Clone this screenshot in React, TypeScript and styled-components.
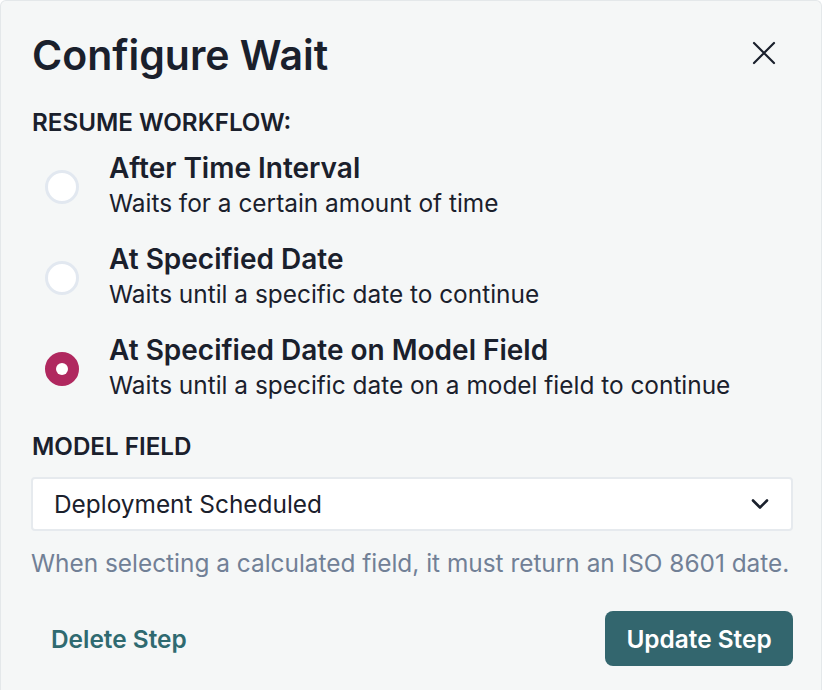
import React, { useState } from "react";
import styled, { createGlobalStyle } from "styled-components";

const GlobalStyle = createGlobalStyle`
  html, body {
    margin: 0;
    padding: 0;
    background: #ffffff;
  }
  body {
    font-family: Inter, "Noto Sans", sans-serif;
    color: #1a202c;
  }
  * { box-sizing: border-box; }
`;

const Panel = styled.div`
  width: 822px;
  height: 690px;
  background: #f5f7f7;
  border: 1px solid #e4e8ea;
  border-bottom: none;
  border-radius: 6px 6px 0 0;
  padding: 27px 28px 0 30px;
  display: flex;
  flex-direction: column;
`;

const Header = styled.div`
  display: flex;
  align-items: flex-start;
  justify-content: space-between;
  padding-left: 1px;
`;

const Title = styled.h2`
  margin: 0;
  font-size: 41px;
  font-weight: 600;
  line-height: 54px;
`;

const CloseButton = styled.button`
  border: none;
  background: transparent;
  padding: 0;
  margin: 10px 14px 0 0;
  width: 30px;
  height: 30px;
  display: flex;
  align-items: center;
  justify-content: center;
  color: #1a202c;
  cursor: pointer;
`;

const SectionLabel = styled.div<{ $top: number }>`
  margin-top: ${({ $top }) => $top}px;
  padding-left: 1px;
  font-size: 24.2px;
  font-weight: 600;
  text-transform: uppercase;
  line-height: 30px;
`;

const Options = styled.div`
  display: flex;
  flex-direction: column;
  gap: 24px;
  margin-top: 14px;
`;

const Option = styled.label`
  display: flex;
  align-items: center;
  gap: 30px;
  padding-left: 14px;
  cursor: pointer;
`;

const RadioDot = styled.span<{ $checked: boolean }>`
  flex: none;
  width: 34px;
  height: 34px;
  margin-top: 3px;
  border-radius: 50%;
  background: ${({ $checked }) => ($checked ? "#b0285f" : "#ffffff")};
  border: 3px solid ${({ $checked }) => ($checked ? "#b0285f" : "#e2e8f0")};
  display: flex;
  align-items: center;
  justify-content: center;
  &::after {
    content: "";
    display: ${({ $checked }) => ($checked ? "block" : "none")};
    width: 12px;
    height: 12px;
    border-radius: 50%;
    background: #ffffff;
  }
`;

const OptionText = styled.div`
  display: flex;
  flex-direction: column;
`;

const OptionTitle = styled.span`
  font-size: 28px;
  font-weight: 600;
  line-height: 32px;
`;

const OptionDesc = styled.span`
  margin-top: 3px;
  font-size: 24.4px;
  line-height: 32px;
`;

const Select = styled.div`
  margin-top: 15px;
  height: 54px;
  background: #ffffff;
  border: 2px solid #e6eaee;
  border-radius: 4px;
  display: flex;
  align-items: center;
  justify-content: space-between;
  padding: 0 22px 0 21px;
  font-size: 24.4px;
`;

const Helper = styled.div`
  margin-top: 17px;
  font-size: 24.4px;
  line-height: 30px;
  color: #718096;
`;

const Footer = styled.div`
  margin-top: 33px;
  display: flex;
  align-items: center;
  justify-content: space-between;
`;

const LinkButton = styled.button`
  border: none;
  background: transparent;
  padding: 0 0 0 20px;
  font-family: inherit;
  font-size: 24.4px;
  font-weight: 600;
  color: #2f6a70;
  cursor: pointer;
`;

const PrimaryButton = styled.button`
  border: none;
  background: #33666e;
  color: #ffffff;
  height: 55px;
  width: 188px;
  border-radius: 8px;
  font-family: inherit;
  font-size: 24.4px;
  font-weight: 600;
  cursor: pointer;
`;

const options = [
  { title: "After Time Interval", desc: "Waits for a certain amount of time" },
  { title: "At Specified Date", desc: "Waits until a specific date to continue" },
  {
    title: "At Specified Date on Model Field",
    desc: "Waits until a specific date on a model field to continue",
  },
];

export default function App() {
  const [selected, setSelected] = useState(2);

  return (
    <>
      <GlobalStyle />
      <Panel>
        <Header>
          <Title>Configure Wait</Title>
          <CloseButton aria-label="Close">
            <svg width="24" height="24" viewBox="0 0 24 24" fill="none" stroke="currentColor" strokeWidth="2.2" strokeLinecap="round">
              <path d="M2 2L22 22M22 2L2 22" />
            </svg>
          </CloseButton>
        </Header>
        <SectionLabel $top={26}>Resume Workflow:</SectionLabel>
        <Options>
          {options.map((o, idx) => (
            <Option key={o.title} onClick={() => setSelected(idx)}>
              <RadioDot $checked={selected === idx} />
              <OptionText>
                <OptionTitle>{o.title}</OptionTitle>
                <OptionDesc>{o.desc}</OptionDesc>
              </OptionText>
            </Option>
          ))}
        </Options>
        <SectionLabel $top={31}>Model Field</SectionLabel>
        <Select>
          <span>Deployment Scheduled</span>
          <svg width="18" height="12" viewBox="0 0 18 12" fill="none" stroke="#1a202c" strokeWidth="2.6" strokeLinecap="round" strokeLinejoin="round">
            <path d="M2 2.5L9 9.5L16 2.5" />
          </svg>
        </Select>
        <Helper>When selecting a calculated field, it must return an ISO 8601 date.</Helper>
        <Footer>
          <LinkButton>Delete Step</LinkButton>
          <PrimaryButton>Update Step</PrimaryButton>
        </Footer>
      </Panel>
    </>
  );
}
